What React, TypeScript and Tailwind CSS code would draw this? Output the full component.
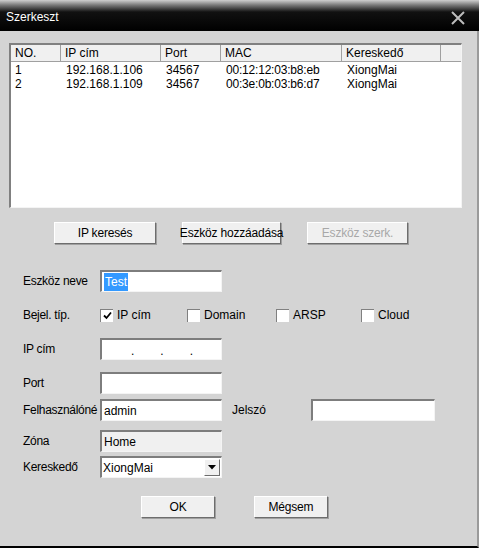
import React from "react";

const font = "font-['Liberation_Sans',Arial,sans-serif]";

const rows = [
  { no: "1", ip: "192.168.1.106", port: "34567", mac: "00:12:12:03:b8:eb", vendor: "XiongMai" },
  { no: "2", ip: "192.168.1.109", port: "34567", mac: "00:3e:0b:03:b6:d7", vendor: "XiongMai" },
];

/* ── Win classic button ── */
const Btn = ({ label, w, disabled }: { label: string; w: string; disabled?: boolean }) => (
  <div
    className={`${w} h-[22px] flex items-center justify-center whitespace-nowrap bg-[#f0f0f0] border border-t-white border-l-white border-b-[#6d6d6d] border-r-[#6d6d6d] shadow-[1px_1px_0_#a0a0a0] text-[12px] tracking-[-0.2px] ${
      disabled ? "text-[#a8a8a8]" : "text-black"
    }`}
  >
    {label}
  </div>
);

/* ── sunken edit box ── */
const Edit = ({ children, w = "w-[122px]", bg = "bg-white" }: { children?: React.ReactNode; w?: string; bg?: string }) => (
  <div
    className={`${w} h-[22px] ${bg} border-t-2 border-l-2 border-b border-r border-t-[#7d7d7d] border-l-[#7d7d7d] border-b-[#f4f4f4] border-r-[#f4f4f4] flex items-center px-[2px] text-[12px]`}
  >
    {children}
  </div>
);

const Check = ({ label, checked, w }: { label: string; checked?: boolean; w: string }) => (
  <div className={`${w} flex items-center gap-[4px]`}>
    <div className="w-[13px] h-[13px] bg-white border-t border-l border-[#808080] border-b-[#e8e8e8] border-r-[#e8e8e8] flex items-center justify-center">
      {checked && (
        <svg width="9" height="9" viewBox="0 0 9 9">
          <path d="M1 4.5 L3.5 7 L8 1.5" stroke="#000" strokeWidth="1.8" fill="none" />
        </svg>
      )}
    </div>
    <span className="text-[12px]">{label}</span>
  </div>
);

const Label = ({ children }: { children: React.ReactNode }) => (
  <div className="w-[100px] text-[12px] tracking-[-0.3px] pl-[23px] shrink-0 whitespace-nowrap">{children}</div>
);

export default function App() {
  return (
    <div className={`w-[479px] h-[548px] bg-[#d4d4d4] ${font} text-black flex flex-col overflow-hidden`}>
      {/* Title bar */}
      <div className="h-[31px] shrink-0 flex items-center justify-between pl-[6px] pr-[14px] bg-[linear-gradient(to_bottom,#cfcfcf_0px,#7a7a7a_5px,#111_12px,#000_31px)]">
        <span className="text-white text-[12px] pt-[2px]">Szerkeszt</span>
        <svg width="14" height="14" viewBox="0 0 14 14" className="mt-[4px]">
          <path d="M1 1 L13 13 M13 1 L1 13" stroke="#bdbdbd" strokeWidth="2" />
        </svg>
      </div>

      <div className="flex-1 flex flex-col border-r-2 border-r-[#9a9a9a] border-b-2 border-b-black">
        {/* Device list */}
        <div className="ml-[9px] mt-[12px] w-[453px] h-[165px] bg-white border-t-2 border-l-2 border-t-[#808080] border-l-[#808080] border-b border-r border-b-[#f4f4f4] border-r-[#f4f4f4] flex flex-col text-[12px]">
          <div className="h-[17px] flex bg-[#f0f0f0] border-b border-b-[#a0a0a0]">
            {[
              ["NO.", "w-[50px]"],
              ["IP cím", "w-[100px]"],
              ["Port", "w-[60px]"],
              ["MAC", "w-[121px]"],
              ["Kereskedő", "w-[99px]"],
              ["", "flex-1"],
            ].map(([t, w], i) => (
              <div key={i} className={`${w} pl-[4px] flex items-center border-r border-r-[#a0a0a0] last:border-r-0`}>
                {t}
              </div>
            ))}
          </div>
          <div className="pt-[1px]">
            {rows.map((r) => (
              <div key={r.no} className="h-[14px] flex items-center">
                <div className="w-[50px] pl-[4px]">{r.no}</div>
                <div className="w-[100px] pl-[5px]">{r.ip}</div>
                <div className="w-[60px] pl-[5px]">{r.port}</div>
                <div className="w-[121px] pl-[5px] tracking-[-0.2px]">{r.mac}</div>
                <div className="w-[99px] pl-[5px]">{r.vendor}</div>
              </div>
            ))}
          </div>
        </div>

        {/* Action buttons */}
        <div className="mt-[14px] pl-[54px] flex gap-[26px]">
          <Btn label="IP keresés" w="w-[102px]" />
          <Btn label="Eszköz hozzáadása" w="w-[99px]" />
          <Btn label="Eszköz szerk." w="w-[101px]" disabled />
        </div>

        {/* Form */}
        <div className="mt-[26px] flex items-center">
          <Label>Eszköz neve</Label>
          <Edit>
            <span className="bg-[#3399ff] text-white px-[1px]">Test</span>
          </Edit>
        </div>

        <div className="mt-[12px] h-[22px] flex items-center">
          <Label>Bejel. típ.</Label>
          <Check label="IP cím" checked w="w-[87px]" />
          <Check label="Domain" w="w-[89px]" />
          <Check label="ARSP" w="w-[85px]" />
          <Check label="Cloud" w="w-[80px]" />
        </div>

        <div className="mt-[12px] flex items-center">
          <Label>IP cím</Label>
          <Edit>
            <div className="flex w-full pl-[27px] gap-[26px] text-[12px] leading-none pt-[3px]">
              <span>.</span>
              <span>.</span>
              <span>.</span>
            </div>
          </Edit>
        </div>

        <div className="mt-[12px] flex items-center">
          <Label>Port</Label>
          <Edit />
        </div>

        <div className="mt-[5px] flex items-center">
          <Label>Felhasználóné</Label>
          <Edit>admin</Edit>
          <div className="w-[89px] pl-[10px] text-[12px]">Jelszó</div>
          <Edit w="w-[124px]" />
        </div>

        <div className="mt-[9px] flex items-center">
          <Label>Zóna</Label>
          <Edit bg="bg-[#f0f0f0]">Home</Edit>
        </div>

        <div className="mt-[4px] flex items-center">
          <Label>Kereskedő</Label>
          <div className="w-[122px] h-[22px] bg-white border-t-2 border-l-2 border-t-[#7d7d7d] border-l-[#7d7d7d] border-b border-r border-b-[#f4f4f4] border-r-[#f4f4f4] flex items-center text-[12px]">
            <span className="flex-1 pl-[1px]">XiongMai</span>
            <div className="w-[16px] h-[17px] mr-[1px] bg-[#f0f0f0] border border-t-white border-l-white border-b-[#6d6d6d] border-r-[#6d6d6d] flex items-center justify-center">
              <svg width="8" height="5" viewBox="0 0 8 5">
                <path d="M0 0 H8 L4 4.5 Z" fill="#000" />
              </svg>
            </div>
          </div>
        </div>

        <div className="mt-[18px] pl-[141px] flex gap-[39px]">
          <Btn label="OK" w="w-[74px]" />
          <Btn label="Mégsem" w="w-[74px]" />
        </div>
      </div>
    </div>
  );
}
